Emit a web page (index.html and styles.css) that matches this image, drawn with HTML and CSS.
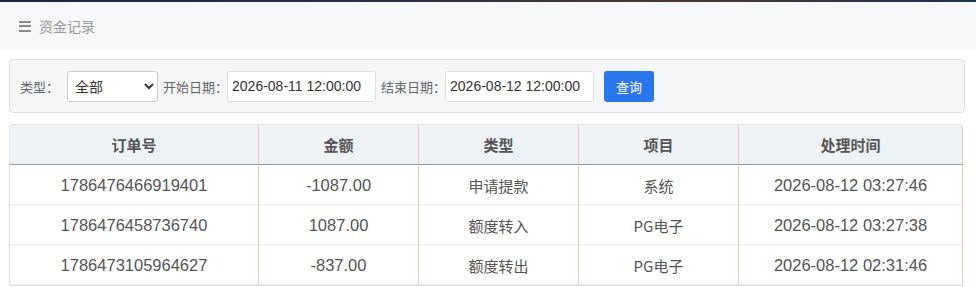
FILE: index.html
```html
<!DOCTYPE html>
<html lang="zh-CN">
<head>
  <meta charset="UTF-8">
  <title>资金记录</title>
  <link rel="stylesheet" href="styles.css">
</head>
<body>
  <div class="topline"></div>
  <div class="header">
    <span class="menu-icon"><i></i><i></i><i></i></span>
    <span>资金记录</span>
  </div>

  <div class="content">
    <div class="filter">
      <label class="type-label">类型：</label>
      <select class="type-select">
        <option>全部</option>
      </select>
      <label>开始日期：</label>
      <input type="text" value="2026-08-11 12:00:00">
      <label>结束日期：</label>
      <input type="text" value="2026-08-12 12:00:00">
      <button class="btn">查询</button>
    </div>

    <table class="records">
      <colgroup>
        <col class="col-order">
        <col class="col-mid">
        <col class="col-mid">
        <col class="col-mid">
        <col>
      </colgroup>
      <thead>
        <tr>
          <th>订单号</th>
          <th>金额</th>
          <th>类型</th>
          <th>项目</th>
          <th>处理时间</th>
        </tr>
      </thead>
      <tbody>
        <tr>
          <td>1786476466919401</td>
          <td>-1087.00</td>
          <td class="cn">申请提款</td>
          <td class="cn">系统</td>
          <td>2026-08-12 03:27:46</td>
        </tr>
        <tr>
          <td>1786476458736740</td>
          <td>1087.00</td>
          <td class="cn">额度转入</td>
          <td class="cn">PG电子</td>
          <td>2026-08-12 03:27:38</td>
        </tr>
        <tr>
          <td>1786473105964627</td>
          <td>-837.00</td>
          <td class="cn">额度转出</td>
          <td class="cn">PG电子</td>
          <td>2026-08-12 02:31:46</td>
        </tr>
      </tbody>
    </table>
  </div>
</body>
</html>
```

FILE: styles.css
```css
body {
  margin: 0;
  font-family: "Noto Sans CJK SC", "Noto Sans", sans-serif;
  background: #fff;
  color: #555;
}

.topline {
  height: 2px;
  background: linear-gradient(90deg, #1b2440, #2a2f45 40%, #4a3a30 70%, #1e3055);
}

.header {
  height: 48px;
  background: #f5f7f9;
  display: flex;
  align-items: center;
  padding-left: 19px;
  font-size: 14px;
  color: #999;
}

.menu-icon {
  display: flex;
  flex-direction: column;
  justify-content: space-between;
  width: 12px;
  height: 11px;
  margin-right: 8px;
}

.menu-icon i {
  display: block;
  height: 2px;
  background: #8a8a8a;
}

.content {
  padding: 9px 11px 0 9px;
}

.filter {
  display: flex;
  align-items: center;
  height: 52px;
  padding: 0 10px;
  background: #f5f6f8;
  border: 1px solid #ddd;
  border-radius: 4px;
  font-size: 13px;
  color: #666;
}

.filter label {
  margin-right: -1px;
}

.filter .type-label {
  margin-right: 8px;
}

.type-select {
  width: 91px;
  height: 31px;
  margin-right: 5px;
  padding: 0 3px;
  border: 1px solid #ccc;
  border-radius: 3px;
  background: #fff;
  font-family: inherit;
  font-size: 14px;
  color: #333;
}

.filter input[type="text"] {
  width: 149px;
  height: 31px;
  box-sizing: border-box;
  margin-right: 5px;
  padding: 0 4px;
  border: 1px solid #ddd;
  border-radius: 3px;
  font-family: "Liberation Sans", Arial, sans-serif;
  font-size: 14px;
  color: #333;
}

.btn {
  width: 50px;
  height: 31px;
  margin-left: 5px;
  border: none;
  border-radius: 3px;
  background: #2a76ef;
  color: #fff;
  font-family: inherit;
  font-size: 13px;
  cursor: pointer;
}

.records {
  width: 954px;
  margin-top: 11px;
  table-layout: fixed;
  border-collapse: separate;
  border-spacing: 0;
  border: 1px solid #e2e2e2;
  border-right-color: #f5c8c8;
  border-radius: 4px 4px 0 0;
  font-size: 16px;
}

.col-order {
  width: 249px;
}

.col-mid {
  width: 160px;
}

.records th,
.records td {
  border-right: 1px solid #f5c8c8;
  text-align: center;
  padding: 0;
}

.records th:last-child,
.records td:last-child {
  border-right: none;
}

.records th {
  height: 39px;
  background: #eff2f5;
  border-bottom: 1px solid #9a9a9a;
  font-size: 15px;
  font-weight: bold;
  color: #555;
}

.records td {
  height: 37px;
  padding-top: 2px;
  border-bottom: 1px solid #ededed;
  font-family: "Liberation Sans", Arial, sans-serif;
  font-size: 16.5px;
  color: #555;
}

.records td.cn {
  font-family: "Noto Sans CJK SC", sans-serif;
  font-size: 15px;
}
```
